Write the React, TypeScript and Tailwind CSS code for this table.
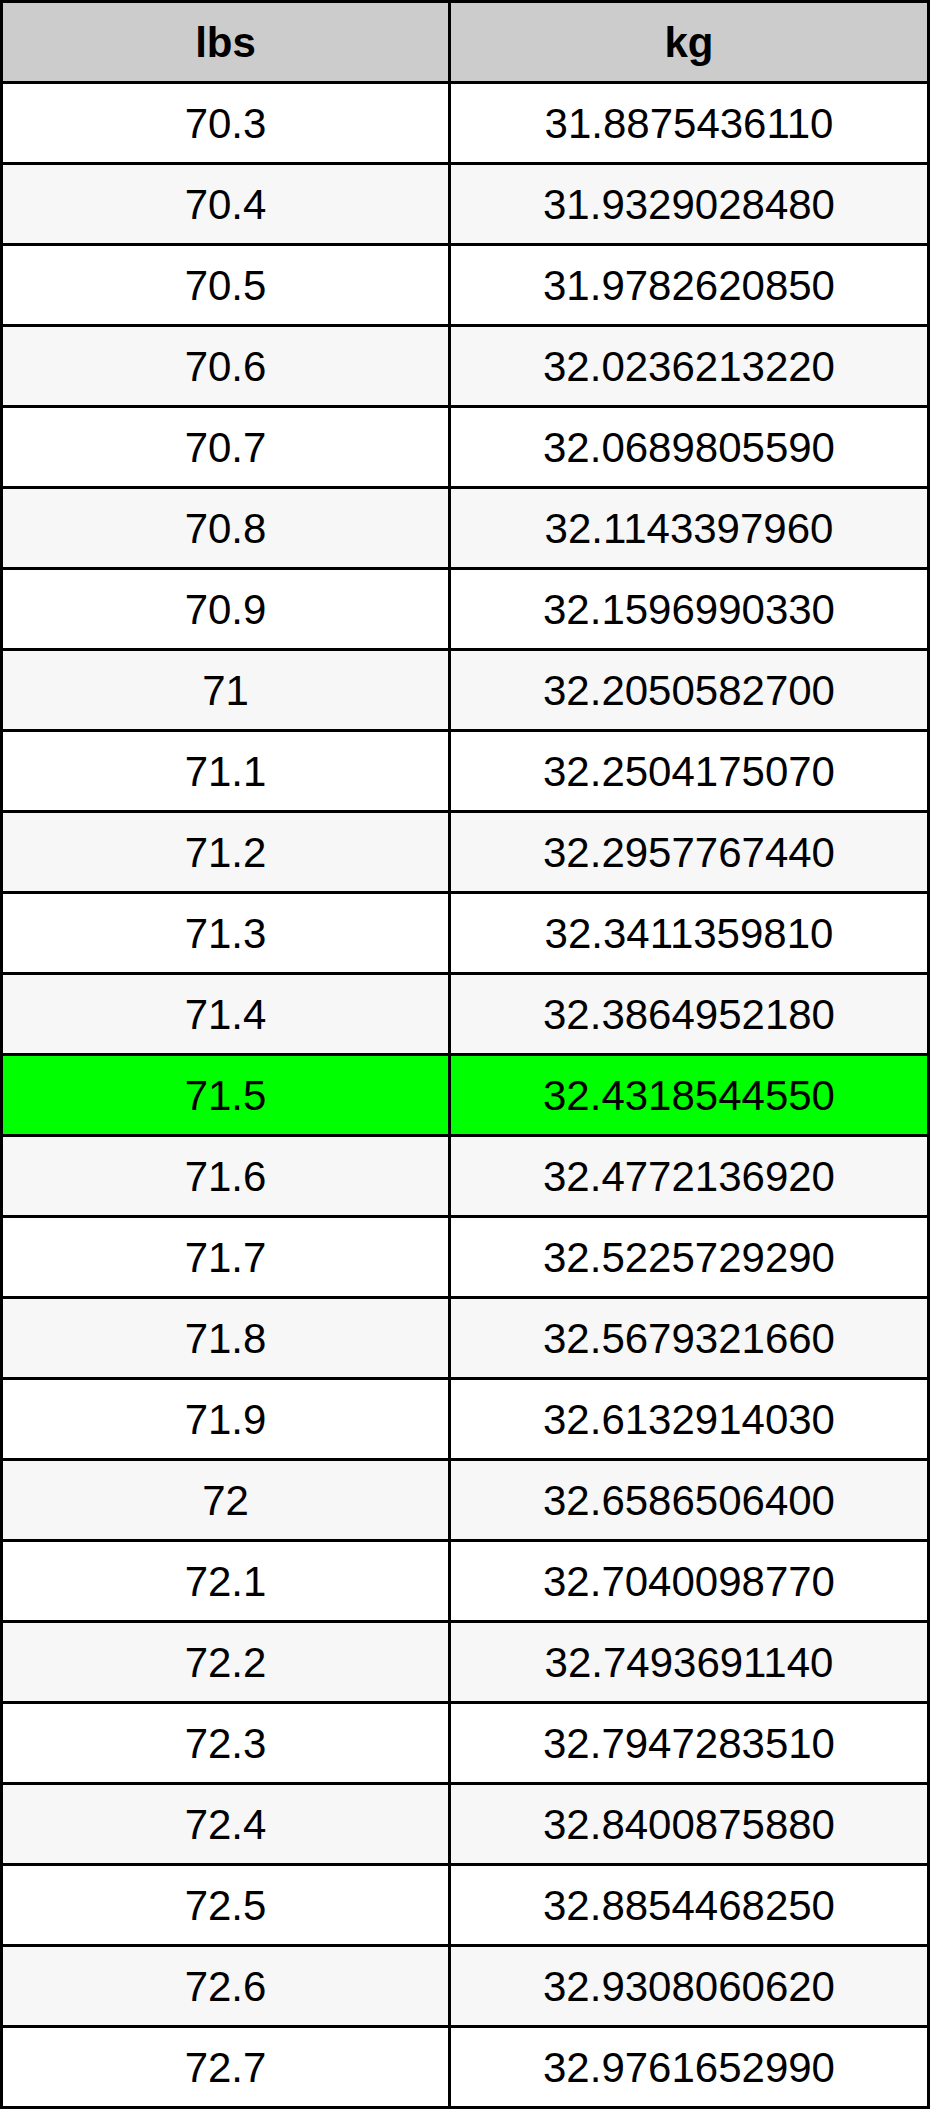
const rows: [string, string][] = [
  ["70.3", "31.8875436110"],
  ["70.4", "31.9329028480"],
  ["70.5", "31.9782620850"],
  ["70.6", "32.0236213220"],
  ["70.7", "32.0689805590"],
  ["70.8", "32.1143397960"],
  ["70.9", "32.1596990330"],
  ["71", "32.2050582700"],
  ["71.1", "32.2504175070"],
  ["71.2", "32.2957767440"],
  ["71.3", "32.3411359810"],
  ["71.4", "32.3864952180"],
  ["71.5", "32.4318544550"],
  ["71.6", "32.4772136920"],
  ["71.7", "32.5225729290"],
  ["71.8", "32.5679321660"],
  ["71.9", "32.6132914030"],
  ["72", "32.6586506400"],
  ["72.1", "32.7040098770"],
  ["72.2", "32.7493691140"],
  ["72.3", "32.7947283510"],
  ["72.4", "32.8400875880"],
  ["72.5", "32.8854468250"],
  ["72.6", "32.9308060620"],
  ["72.7", "32.9761652990"],
];

export default function App() {
  return (
    <div className="bg-white min-h-[2115px] font-['Liberation_Sans',Arial,sans-serif] text-black">
      <div className="w-[930px] border-[3px] border-black">
        {/* header */}
        <div className="flex h-[78px] bg-[#cccccc] font-bold text-[42px]">
          <div className="w-[448px] border-r-[3px] border-black flex items-center justify-center">
            lbs
          </div>
          <div className="flex-1 flex items-center justify-center">kg</div>
        </div>

        {rows.map(([lbs, kg], i) => {
          const bg = lbs === "71.5" ? "bg-[#00ff00]" : i % 2 === 0 ? "bg-white" : "bg-[#f7f7f7]";
          return (
            <div
              key={lbs}
              className={`flex h-[81px] border-t-[3px] border-black text-[42px] ${bg}`}
            >
              <div className="w-[448px] border-r-[3px] border-black flex items-center justify-center">
                {lbs}
              </div>
              <div className="flex-1 flex items-center justify-center">{kg}</div>
            </div>
          );
        })}
      </div>
    </div>
  );
}
